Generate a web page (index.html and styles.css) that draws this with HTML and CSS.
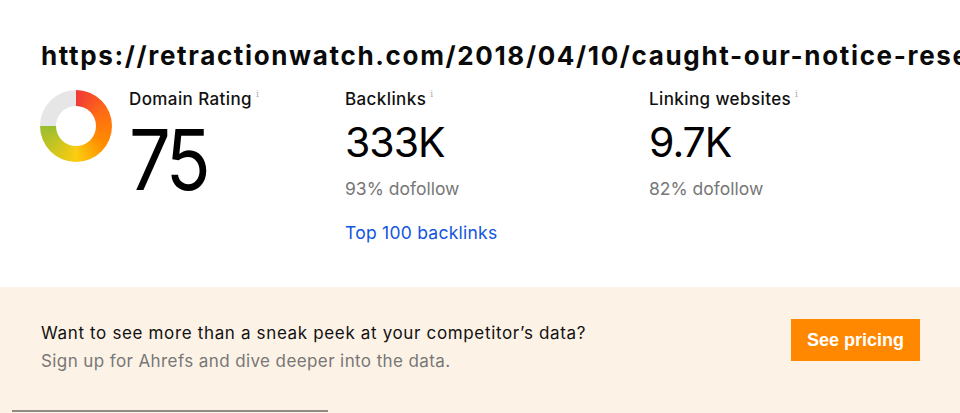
FILE: index.html
```html
<!DOCTYPE html>
<html>
<head>
<meta charset="utf-8">
<link rel="stylesheet" href="styles.css">
</head>
<body>
<div class="page">
  <section class="overview">
    <h1 class="url">https://retractionwatch.com/2018/04/10/caught-our-notice-researchers-find-evidence</h1>
    <div class="stats">
      <div class="stat stat-dr">
        <div class="donut"><div class="donut-hole"></div></div>
        <div class="stat-body">
          <div class="label">Domain Rating<sup class="info">i</sup></div>
          <div class="dr-value">75</div>
        </div>
      </div>
      <div class="stat">
        <div class="label">Backlinks<sup class="info">i</sup></div>
        <div class="value">333K</div>
        <div class="sub">93% dofollow</div>
        <a class="link" href="#">Top 100 backlinks</a>
      </div>
      <div class="stat">
        <div class="label">Linking websites<sup class="info">i</sup></div>
        <div class="value">9.7K</div>
        <div class="sub">82% dofollow</div>
      </div>
    </div>
  </section>
  <section class="promo">
    <div class="promo-text">
      <p class="promo-title">Want to see more than a sneak peek at your competitor’s data?</p>
      <p class="promo-sub">Sign up for Ahrefs and dive deeper into the data.</p>
    </div>
    <a class="btn" href="#">See pricing</a>
  </section>
  <div class="scrollbar"></div>
</div>
</body>
</html>
```

FILE: styles.css
```css
html, body {
  margin: 0;
  padding: 0;
  background: #fff;
  overflow: hidden;
}
body {
  font-family: Inter, "Liberation Sans", sans-serif;
  color: #111;
}
.page {
  width: 960px;
  height: 413px;
  overflow: hidden;
  position: relative;
  background: #fdf2e6;
}
.overview {
  background: #fff;
  padding: 40px 0 0 41px;
  height: 287px;
  box-sizing: border-box;
}
.url {
  margin: 0;
  font-size: 26px;
  font-weight: 700;
  line-height: 32px;
  white-space: nowrap;
  color: #0a0a0a;
  letter-spacing: 1.65px;
}
.stats {
  display: grid;
  grid-template-columns: 304px 304px 304px;
  margin-top: 17px;
}
.stat-dr {
  display: flex;
  gap: 17px;
  margin-left: -1px;
}
.donut {
  width: 72px;
  height: 72px;
  border-radius: 50%;
  background: conic-gradient(#f03838 0deg, #ff6a14 60deg, #ff8a00 120deg, #fbcd10 180deg, #99bd30 270deg, #e6e6e6 270deg, #e6e6e6 360deg);
  display: flex;
  align-items: center;
  justify-content: center;
  margin-top: 1px;
}
.donut-hole {
  width: 40px;
  height: 40px;
  border-radius: 50%;
  background: #fff;
}
.label {
  font-size: 17px;
  line-height: 20px;
  font-weight: 500;
  letter-spacing: 0.4px;
  color: #111;
}
.info {
  font-family: "DejaVu Serif", serif;
  font-size: 9px;
  color: #aaa;
  margin-left: 4px;
  vertical-align: 8px;
  line-height: 0;
}
.dr-value {
  font-size: 84px;
  line-height: 84px;
  font-weight: 400;
  letter-spacing: -5px;
  color: #000;
  margin-top: 9px;
  transform: scaleX(0.88);
  transform-origin: left center;
}
.value {
  font-size: 41px;
  line-height: 48px;
  font-weight: 400;
  color: #000;
  margin-top: 9px;
  letter-spacing: -1px;
}
.sub {
  font-size: 17.5px;
  line-height: 22px;
  color: #777;
  margin-top: 12px;
}
.link {
  display: inline-block;
  font-size: 17.5px;
  line-height: 22px;
  letter-spacing: 0.25px;
  color: #1155dd;
  text-decoration: none;
  margin-top: 22px;
}
.promo {
  display: flex;
  align-items: flex-start;
  justify-content: space-between;
  padding: 32px 40px 0 41px;
  height: 126px;
  box-sizing: border-box;
}
.promo-text p {
  margin: 0;
  font-size: 17px;
  line-height: 28px;
}
.promo-title {
  color: #111;
  letter-spacing: 0.65px;
}
.promo-sub {
  color: #777;
  letter-spacing: 0.4px;
}
.btn {
  display: flex;
  align-items: center;
  justify-content: center;
  width: 129px;
  height: 42px;
  background: #ff8800;
  color: #fff;
  font-weight: 700;
  font-size: 18px;
  text-decoration: none;
  font-family: "Liberation Sans", sans-serif;
}
.scrollbar {
  position: absolute;
  left: 12px;
  top: 410px;
  width: 316px;
  height: 2px;
  background: #8f8a86;
}
```
